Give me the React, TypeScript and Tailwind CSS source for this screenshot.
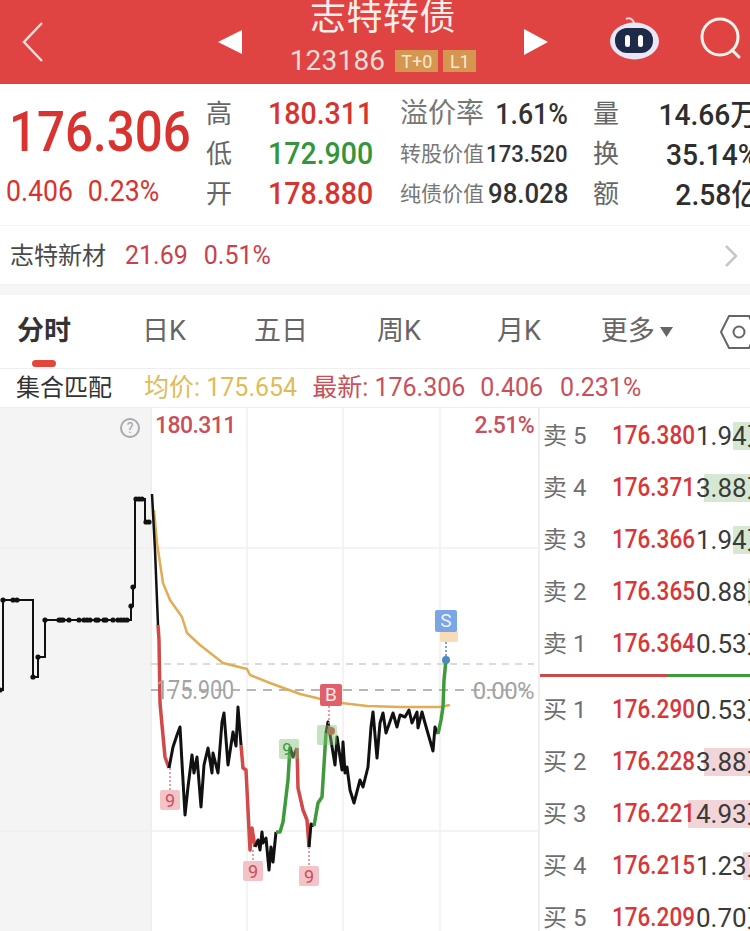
const sans = "font-['Roboto','Noto_Sans_CJK_SC',sans-serif]"

const preLine = "0,690 3,690 3,600 33,600 33,677 38,677 38,657 45,657 45,620 131,620 131,606 133,606 133,587 135,587 135,499 145,499 145,522 150,522"
const preDots = [
  [0, 690], [3, 600], [13, 600], [17, 600], [33, 677], [38, 657], [45, 620],
  [59, 620], [61, 620], [63, 620], [69, 620], [79, 620], [84, 620], [87, 620], [90, 620], [96, 620], [98, 620],
  [104, 620], [106, 620], [113, 620], [118, 620], [121, 620], [124, 620], [127, 620],
  [131, 606], [133, 587], [136, 499], [139, 499], [142, 499], [146, 522], [149, 522],
]

const segments: { color: string; width: number; points: string }[] = [
  { color: "#111111", width: 2.5, points: "152,494 155,550 158,625" },
  { color: "#d24a48", width: 3.5, points: "158,625 159,640 160,703 162,725 165,757 169,768" },
  { color: "#111111", width: 3, points: "169,768 173,747 177,735 180,727 182,763 185,815 188,787 192,755 194,773 197,757 201,807 204,765 208,748 212,773 213,753 218,773 222,722 224,713 228,765 233,732 236,746 238,707 241,745" },
  { color: "#d24a48", width: 3.5, points: "241,745 243,768 246,770 250,850 252,828 255,847" },
  { color: "#111111", width: 3, points: "255,847 258,840 260,850 262,832 263,843 266,838 269,870 271,847 273,862 276,832" },
  { color: "#3f9a3c", width: 3.5, points: "276,832 280,832 283,822 288,780 290,747" },
  { color: "#111111", width: 3, points: "290,747 293,757 297,748" },
  { color: "#d24a48", width: 3.5, points: "297,748 298,788 303,810 307,820 309,847" },
  { color: "#111111", width: 3, points: "309,847 311,824 314,826" },
  { color: "#3f9a3c", width: 3.5, points: "314,826 318,803 322,797 324,765 326,733" },
  { color: "#111111", width: 3, points: "326,733 328,722 335,765 337,737 342,770 343,742 345,773 347,767 350,790 354,803 360,780 363,787 368,767 371,727 373,712 377,758 380,723 383,713 386,733 393,713 397,727 400,715 405,717 409,710 412,723 417,712 418,728 422,712 425,723 433,751 435,727 438,734" },
  { color: "#3f9a3c", width: 3.5, points: "438,734 441,720 443,707 444,680 446,660" },
]

const avgLine = "154,510 157,543 163,583 170,600 182,617 187,633 200,645 223,663 247,669 250,675 270,683 300,694 333,702 367,706 400,707 440,707 450,705"

const asks = [
  { label: "卖", level: 5, price: "176.380", vol: "1.94万", bar: 17 },
  { label: "卖", level: 4, price: "176.371", vol: "3.88万", bar: 46 },
  { label: "卖", level: 3, price: "176.366", vol: "1.94万", bar: 17 },
  { label: "卖", level: 2, price: "176.365", vol: "0.88万", bar: 2 },
  { label: "卖", level: 1, price: "176.364", vol: "0.53万", bar: 0 },
]

const bids = [
  { label: "买", level: 1, price: "176.290", vol: "0.53万", bar: 0 },
  { label: "买", level: 2, price: "176.228", vol: "3.88万", bar: 46 },
  { label: "买", level: 3, price: "176.221", vol: "4.93万", bar: 62 },
  { label: "买", level: 4, price: "176.215", vol: "1.23万", bar: 7 },
  { label: "买", level: 5, price: "176.209", vol: "0.70万", bar: 0 },
]

function RobotIcon() {
  return (
    <svg width="50" height="44" viewBox="0 0 50 44">
      <path d="M16 2 C20 0 24 3 24 7" fill="none" stroke="#f6d3d6" strokeWidth="2" />
      <ellipse cx="24.5" cy="24" rx="24.5" ry="18.5" fill="#e9e6f6" />
      <rect x="5" y="11" width="38" height="25" rx="12" fill="#1f2a48" />
      <rect x="15" y="18" width="5" height="12" rx="2.5" fill="#ffffff" />
      <rect x="28" y="18" width="5" height="12" rx="2.5" fill="#ffffff" />
    </svg>
  )
}

function SearchIcon() {
  return (
    <svg width="46" height="46" viewBox="0 0 46 46" fill="none" stroke="#fdf3ec" strokeWidth="3">
      <circle cx="21" cy="20" r="18" />
      <path d="M33 33 L40 40" strokeLinecap="round" />
    </svg>
  )
}

function Header() {
  return (
    <header className="flex h-[84px] items-center overflow-hidden bg-[#df4342] text-white">
      <svg className="ml-[20px] shrink-0" width="26" height="42" viewBox="0 0 26 42" fill="none" stroke="#f8dcd8" strokeWidth="2.5">
        <path d="M22 2 L4 21 L22 40" />
      </svg>
      <svg className="ml-[172px] shrink-0" width="24" height="26" viewBox="0 0 24 26">
        <path d="M24 1 L24 25 L0 13 Z" fill="#ffffff" />
      </svg>
      <div className="flex h-[84px] w-[282px] shrink-0 flex-col items-center">
        <div className="-mt-[5px] h-[48px] text-[36px] leading-[46px] tracking-[0.5px] text-[#fbeeea]">志特转债</div>
        <div className="flex h-[36px] items-center">
          <span className="text-[28px] tracking-[0.2px] text-[#f7dcd6]">123186</span>
          <span className="ml-[10px] flex h-[22px] w-[43px] items-center justify-center bg-[#d59650] text-[18px] text-[#fbe9d4]">T+0</span>
          <span className="ml-[5px] flex h-[22px] w-[33px] items-center justify-center bg-[#d59650] text-[18px] text-[#fbe9d4]">L1</span>
        </div>
      </div>
      <svg className="shrink-0" width="24" height="26" viewBox="0 0 24 26">
        <path d="M0 0 L24 13 L0 26 Z" fill="#ffffff" />
      </svg>
      <div className="-mt-[6px] ml-[62px] shrink-0">
        <RobotIcon />
      </div>
      <div className="-mt-[4px] ml-[39px] shrink-0">
        <SearchIcon />
      </div>
    </header>
  )
}

function StatRow({ label, value, valueClass, metric, metricClass, metricValue, metricValueClass, side, sideValue }: {
  label: string
  value: string
  valueClass: string
  metric: string
  metricClass: string
  metricValue: string
  metricValueClass: string
  side: string
  sideValue: string
}) {
  return (
    <div className="grid h-[40px] grid-cols-[62px_132px_90px_78px_25px_40px_126px] items-center">
      <span className="text-[26px] text-[#666666]">{label}</span>
      <span className={`origin-left scale-x-[0.92] whitespace-nowrap text-[31px] font-medium ${valueClass}`}>{value}</span>
      <span className={`whitespace-nowrap text-[#777777] ${metricClass}`}>{metric}</span>
      <span className={`origin-right scale-x-[0.92] justify-self-end whitespace-nowrap font-medium text-[#333333] ${metricValueClass}`}>{metricValue}</span>
      <span />
      <span className="text-[26px] text-[#666666]">{side}</span>
      <span className="origin-right scale-x-[0.94] justify-self-end whitespace-nowrap text-[30px] font-medium text-[#2e2e2e]">{sideValue}</span>
    </div>
  )
}

function Summary() {
  return (
    <section className="flex h-[141px] overflow-hidden">
      <div className="w-[206px] shrink-0">
        <div className="ml-[9px] mt-[16px] h-[64px] origin-left scale-x-[0.88] whitespace-nowrap text-[56px] font-medium leading-[64px] text-[#d9332f]">176.306</div>
        <div className="ml-[6px] mt-[12px] flex origin-left scale-x-[0.92] gap-[16px] whitespace-nowrap text-[29px] leading-[30px] text-[#d9332f]">
          <span>0.406</span>
          <span>0.23%</span>
        </div>
      </div>
      <div className="mt-[7px] flex-1">
        <StatRow label="高" value="180.311" valueClass="text-[#d9332f]" metric="溢价率" metricClass="text-[28px]" metricValue="1.61%" metricValueClass="text-[29px]" side="量" sideValue="14.66万" />
        <StatRow label="低" value="172.900" valueClass="text-[#34963a]" metric="转股价值" metricClass="text-[21px]" metricValue="173.520" metricValueClass="text-[24px]" side="换" sideValue="35.14%" />
        <StatRow label="开" value="178.880" valueClass="text-[#d9332f]" metric="纯债价值" metricClass="text-[21px]" metricValue="98.028" metricValueClass="text-[28px]" side="额" sideValue="2.58亿" />
      </div>
    </section>
  )
}

function StockRow() {
  return (
    <section className="flex h-[60px] items-center border-y border-[#f3f3f3] pl-[10px] pt-[2px]">
      <span className="text-[24px] text-[#4a4a4a]">志特新材</span>
      <span className="ml-[19px] text-[25px] text-[#c9414a]">21.69</span>
      <span className="ml-[16px] text-[25px] text-[#c9414a]">0.51%</span>
      <svg className="ml-auto mr-[12px]" width="14" height="24" viewBox="0 0 14 24" fill="none" stroke="#c4c8c8" strokeWidth="2.5">
        <path d="M2 2 L12 12 L2 22" />
      </svg>
    </section>
  )
}

function Tabs() {
  return (
    <nav className="relative flex h-[83px] items-center overflow-hidden whitespace-nowrap border-t-[10px] border-[#f6f6f6] text-[27px] text-[#666666]">
      <span className="ml-[17px] shrink-0 font-bold text-[#333333]">分时</span>
      <span className="ml-[71px] shrink-0">日K</span>
      <span className="ml-[68px] shrink-0">五日</span>
      <span className="ml-[69px] shrink-0">周K</span>
      <span className="ml-[76px] shrink-0">月K</span>
      <span className="ml-[60px] shrink-0">更多</span>
      <svg className="ml-[5px] shrink-0" width="13" height="10" viewBox="0 0 13 10">
        <path d="M0 0 L13 0 L6.5 10 Z" fill="#666666" />
      </svg>
      <svg className="ml-[47px] shrink-0" width="38" height="36" viewBox="0 0 38 36" fill="none" stroke="#666666" strokeWidth="2">
        <path d="M9 2 L29 2 L37 18 L29 34 L9 34 L1 18 Z" />
        <circle cx="19" cy="18" r="5.5" />
      </svg>
      <span className="absolute bottom-[1px] left-[32px] h-[7px] w-[24px] rounded-full bg-[#e3463a]" />
    </nav>
  )
}

function QuoteBar() {
  return (
    <div className="flex h-[40px] items-center border-y border-[#efefef] pl-[16px] text-[25px]">
      <span className="text-[24px] text-[#333333]">集合匹配</span>
      <span className="ml-[32px] text-[#e0bc58]">均价: 175.654</span>
      <span className="ml-[15px] text-[#c9505a]">最新: 176.306</span>
      <span className="ml-[15px] text-[#c9505a]">0.406</span>
      <span className="ml-[17px] text-[#c9505a]">0.231%</span>
    </div>
  )
}

function ChartSvg() {
  return (
    <svg className="block" width="538" height="523" viewBox="0 408 538 523" fill="none">
      <rect x="0" y="408" width="151" height="523" fill="#f4f4f5" />
      <g stroke="#efefef" strokeWidth="1.5">
        <path d="M151 408 V931" strokeWidth="2" />
        <path d="M247 408 V931" />
        <path d="M343 408 V931" />
        <path d="M440 408 V931" />
        <path d="M0 548 H538" />
        <path d="M0 831 H538" />
      </g>
      <path d="M151 664 H534" stroke="#cfcfcf" strokeWidth="1.5" strokeDasharray="7 6" />
      <path d="M151 690 H534" stroke="#9e9e9e" strokeWidth="1.5" strokeDasharray="9 7" />
      <polyline points={preLine} stroke="#111111" strokeWidth="2" />
      {preDots.map(([x, y], i) => (
        <circle key={i} cx={x} cy={y} r="2.6" fill="#111111" />
      ))}
      <polyline points={avgLine} stroke="#e2ac55" strokeWidth="2.5" strokeLinejoin="round" />
      {segments.map((s, i) => (
        <polyline key={i} points={s.points} stroke={s.color} strokeWidth={s.width} strokeLinejoin="round" />
      ))}
      <g stroke="#d9808a" strokeWidth="1.5" strokeDasharray="2 2">
        <path d="M170 768 V790" />
        <path d="M253 850 V861" />
        <path d="M309 847 V866" />
        <path d="M329 706 V730" />
      </g>
      <path d="M446 634 V660" stroke="#7fa3c9" strokeWidth="2" strokeDasharray="2 2" />
      <circle cx="446" cy="660" r="4" fill="#4a8ac4" />
      <circle cx="331" cy="731" r="4" fill="#cf4a42" />
    </svg>
  )
}

function NineBadge({ className }: { className: string }) {
  return (
    <span className={`absolute flex h-[20px] w-[20px] items-center justify-center rounded-[2px] bg-[#f4c3c8] text-[18px] text-[#c9505a] ${className}`}>9</span>
  )
}

function Chart() {
  return (
    <div className="relative h-[523px] w-[538px] shrink-0 overflow-hidden">
      <ChartSvg />
      <span className="absolute left-[120px] top-[10px] flex h-[20px] w-[20px] items-center justify-center rounded-full border-2 border-[#a9a9a9] text-[14px] text-[#a0a0a0]">?</span>
      <span className="absolute left-[155px] top-[1px] text-[23px] font-medium tracking-[-0.6px] text-[#c9505a]">180.311</span>
      <span className="absolute right-[4px] top-[1px] text-[23px] font-medium tracking-[-0.6px] text-[#c9505a]">2.51%</span>
      <span className="absolute left-[156px] top-[264px] origin-left scale-x-[0.86] text-[25px] text-[#a3a3a3]">175.900</span>
      <span className="absolute right-[4px] top-[265px] text-[24px] tracking-[-0.6px] text-[#a3a3a3]">0.00%</span>
      <NineBadge className="left-[160px] top-[382px]" />
      <NineBadge className="left-[243px] top-[453px]" />
      <NineBadge className="left-[299px] top-[458px]" />
      <span className="absolute left-[279px] top-[331px] flex h-[20px] w-[20px] items-center justify-center rounded-[2px] bg-[#7fbf76]/45 pr-[4px] text-[17px] leading-[14px] text-[#3f9a3c]">9</span>
      <span className="absolute left-[317px] top-[317px] h-[20px] w-[20px] rounded-[2px] bg-[#7fbf76]/45" />
      <span className="absolute left-[320px] top-[276px] flex h-[22px] w-[22px] items-center justify-center rounded-[2px] bg-[#df6068] text-[19px] text-[#fde8e8]">B</span>
      <span className="absolute left-[440px] top-[222px] h-[12px] w-[18px] rounded-[2px] bg-[#f8dcb8]" />
      <span className="absolute left-[435px] top-[202px] flex h-[22px] w-[22px] items-center justify-center rounded-[2px] bg-[#7aa6e6] text-[19px] text-[#eef4ff]">S</span>
    </div>
  )
}

function BookRow({ row, barColor }: { row: typeof asks[number]; barColor: string }) {
  return (
    <div className="relative flex h-[52px] items-center">
      <span className="absolute right-0 top-[12px] h-[28px]" style={{ width: row.bar, backgroundColor: barColor }} />
      <span className="w-[72px] shrink-0 whitespace-nowrap pl-[3px] text-[24px] text-[#6e6e6e]">
        {row.label} {row.level}
      </span>
      <span className="relative w-[84px] shrink-0 origin-left scale-x-[0.9] whitespace-nowrap text-[25px] font-medium text-[#d9363a]">{row.price}</span>
      <span className="relative whitespace-nowrap text-[26px] text-[#3a3a3a]">{row.vol}</span>
    </div>
  )
}

function OrderBook() {
  return (
    <div className="flex-1 overflow-hidden border-l-2 border-[#eeeeee] pt-[2px]">
      {asks.map((row) => (
        <BookRow key={row.price} row={row} barColor="#d6e8d3" />
      ))}
      <div className="mt-[4px] flex h-[3px]">
        <div className="w-[127px] bg-[#c94a48]" />
        <div className="flex-1 bg-[#3f9a3c]" />
      </div>
      <div className="mt-[7px]">
        {bids.map((row) => (
          <BookRow key={row.price} row={row} barColor="#f2d5d8" />
        ))}
      </div>
    </div>
  )
}

export default function App() {
  return (
    <div className={`h-[931px] w-[750px] overflow-hidden bg-white ${sans}`}>
      <Header />
      <Summary />
      <StockRow />
      <Tabs />
      <QuoteBar />
      <div className="flex">
        <Chart />
        <OrderBook />
      </div>
    </div>
  )
}
